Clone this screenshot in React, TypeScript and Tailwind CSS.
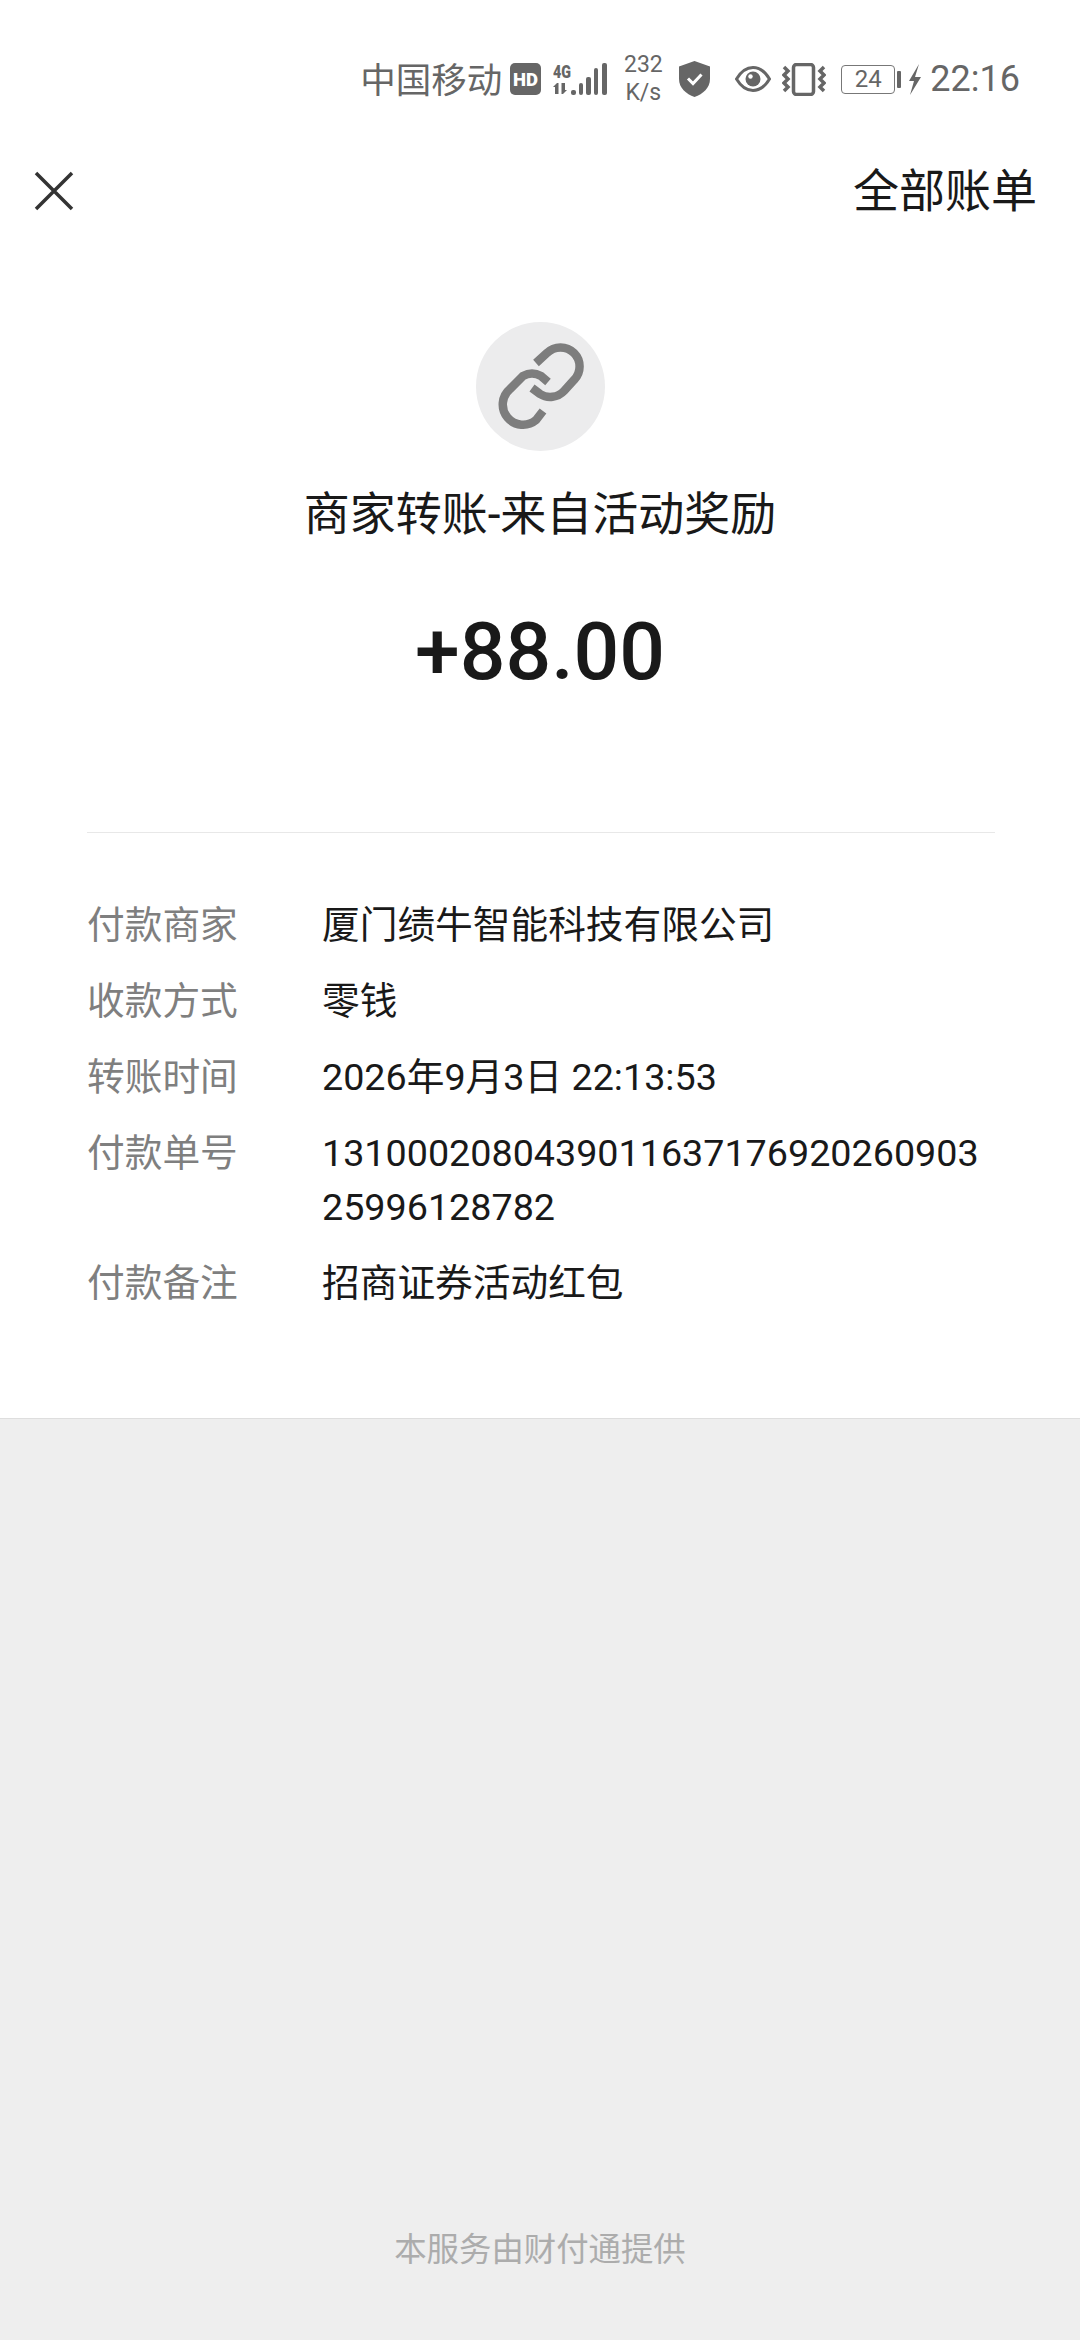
const sans = '[font-family:Roboto,"Noto_Sans_CJK_SC",sans-serif]'

const rows = [
  { label: '付款商家', value: '厦门绩牛智能科技有限公司' },
  { label: '收款方式', value: '零钱' },
  { label: '转账时间', value: '2026年9月3日 22:13:53' },
  { label: '付款单号', value: '131000208043901163717692026090325996128782' },
  { label: '付款备注', value: '招商证券活动红包' }
]

function StatusBar() {
  return (
    <div className="flex h-[160px] items-center justify-end pb-[2px] pr-[60px] text-[#666666]">
      <span className="pt-[5px] text-[35.500px] leading-none">中国移动</span>
      <svg className="ml-[8px]" width="31" height="32" viewBox="0 0 31 32">
        <rect width="31" height="32" rx="5" fill="#666666" />
        <text x="15.500" y="22.500" textAnchor="middle" fontSize="19" fontWeight="900" fill="#fff" fontFamily="Roboto" textLength="25" lengthAdjust="spacingAndGlyphs">HD</text>
      </svg>
      <svg className="ml-[12px] -mt-[4px]" width="54" height="36" viewBox="0 -4 54 36" fill="#666666">
        <text x="0" y="14.500" fontSize="19" fontWeight="900" fontFamily="Roboto" textLength="18" lengthAdjust="spacingAndGlyphs">4G</text>
        <path d="M4 20l-4 4h2v7h3.500V20zM10 31l4-4h-2v-7H8.500v11z" />
        <rect x="18" y="27" width="5" height="5" rx="2" />
        <rect x="26" y="20" width="4" height="12" rx="2" />
        <rect x="33" y="14" width="5" height="18" rx="2" />
        <rect x="41" y="5" width="4" height="27" rx="2" />
        <rect x="49" y="0" width="5" height="32" rx="2" />
      </svg>
      <div className="ml-[16px] flex w-[40px] flex-col items-center text-[23px] leading-[28px]">
        <span>232</span>
        <span>K/s</span>
      </div>
      <svg className="ml-[16px]" width="31" height="36" viewBox="0 0 31 36">
        <path d="M15.500 0L31 5.500V18c0 9-7 15-15.500 18C7 33 0 27 0 18V5.500z" fill="#666666" />
        <path d="M9 17.500l5 5 8.500-9" fill="none" stroke="#fff" strokeWidth="3" />
      </svg>
      <svg className="ml-[25px]" width="36" height="26" viewBox="0 0 36 26">
        <path d="M1.500 13C6 5.500 12 1.500 18 1.500S30 5.500 34.500 13C30 20.500 24 24.500 18 24.500S6 20.500 1.500 13z" fill="none" stroke="#666666" strokeWidth="3" />
        <circle cx="18" cy="13" r="7.500" fill="#666666" />
        <circle cx="15.500" cy="10.500" r="2.200" fill="#fff" />
      </svg>
      <svg className="ml-[11px]" width="44" height="33" viewBox="0 0 44 33">
        <rect x="11.500" y="1.500" width="20" height="30" rx="3" fill="none" stroke="#666666" strokeWidth="3.500" />
        <path d="M2 4l4 4-4 4 4 4-4 4 4 4-4 4M42 4l-4 4 4 4-4 4 4 4-4 4 4 4" fill="none" stroke="#666666" strokeWidth="3.500" />
      </svg>
      <div className="ml-[15px] flex h-[29px] w-[54px] items-center justify-center rounded-[4px] border border-[#777777] text-[24px] leading-none">
        24
      </div>
      <div className="ml-[2px] h-[17px] w-[4px] rounded-[1px] bg-[#666666]" />
      <svg className="ml-[7px]" width="13" height="31" viewBox="0 0 13 31">
        <path d="M11 0L1 17h5L2 31l11-18H7z" fill="#666666" />
      </svg>
      <span className="ml-[9px] text-[36px] leading-none">22:16</span>
    </div>
  )
}

function LinkIcon() {
  return (
    <svg width="129" height="129" viewBox="0 0 129 129" className="rounded-full bg-[#ececed]">
      <g fill="none" stroke="#7d7d7d" strokeWidth="8.500">
        <path d="M60 41L71 31A19 19 0 0 1 98 58L88 69A19 19 0 0 1 64 72L56 66" />
        <path d="M72 60L65 54A19 19 0 0 0 47 54L34 67A19 19 0 0 0 60 98L67 89" />
      </g>
    </svg>
  )
}

export default function App() {
  return (
    <main className={`flex h-[2340px] w-[1080px] flex-col overflow-hidden bg-[#eeeeee] ${sans}`}>
      <section className="flex h-[1419px] flex-col border-b border-[#dedede] bg-white">
        <StatusBar />
        <div className="flex h-[60px] items-center justify-between pl-[34px] pr-[43px] pt-[2px]">
          <svg width="40" height="40" viewBox="0 0 40 40">
            <path d="M2 2l36 36M38 2L2 38" stroke="#333333" strokeWidth="3.500" fill="none" />
          </svg>
          <span className="text-[46px] leading-none text-[#191919]">全部账单</span>
        </div>
        <div className="mt-[102px] flex flex-col items-center">
          <LinkIcon />
          <h1 className="mt-[33px] text-[46px] font-normal leading-[60px] text-[#191919]">商家转账-来自活动奖励</h1>
          <p className="mt-[63px] text-[80.500px] font-medium leading-[90px] text-[#191919]">+88.00</p>
        </div>
        <div className="ml-[87px] mr-[85px] mt-[135px] border-t border-[#e8e8e8]" />
        <dl className="mt-[65px] flex flex-col gap-[22px] px-[87px] text-[37.700px] leading-[54px]">
          {rows.map(row => (
            <div key={row.label} className="flex">
              <dt className="w-[235px] shrink-0 text-[#7f7f7f]">{row.label}</dt>
              <dd className="w-[672px] break-all text-[#191919]">{row.value}</dd>
            </div>
          ))}
        </dl>
      </section>
      <footer className="mt-[811px] text-center text-[32.400px] leading-[40px] text-[#acacac]">本服务由财付通提供</footer>
    </main>
  )
}
